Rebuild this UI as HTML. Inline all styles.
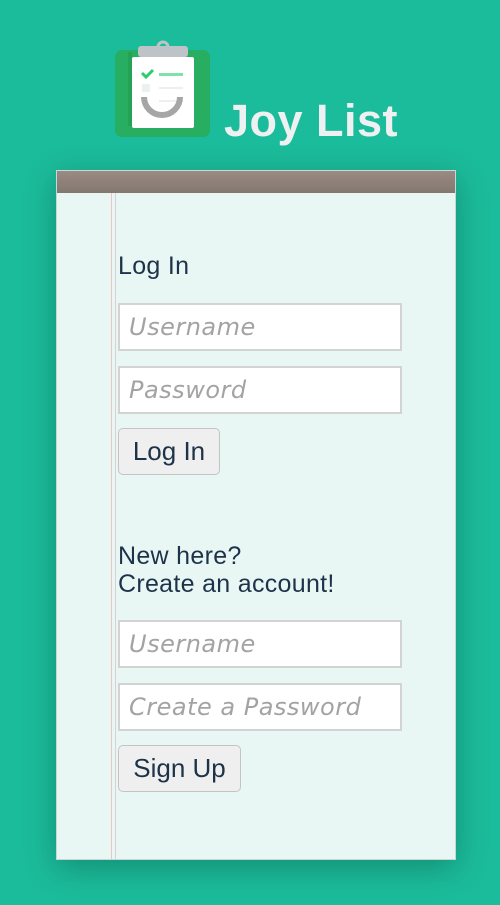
<!DOCTYPE html>
<html><head><style>
body{margin:0;width:500px;height:905px;background:#1bbc9b;font-family:"Liberation Sans",sans-serif;position:relative;overflow:hidden}
.card{position:absolute;left:56px;top:170px;width:400px;height:690px;background:#e8f7f4;box-shadow:0 8px 30px rgba(0,0,0,.25);border:1px solid #c9d8d4;box-sizing:border-box}
.bar{position:absolute;left:0;top:0;right:0;height:22px;background:linear-gradient(#9a8b83,#847770)}
.l1{position:absolute;top:22px;bottom:0;left:54px;width:1px;background:#e9c5c5}
.l2{position:absolute;top:22px;bottom:0;left:58px;width:1px;background:#e3cccc}
.t{position:absolute;left:118px;font-size:25px;color:#1e3349;line-height:28px;letter-spacing:0.3px}
.in{position:absolute;left:118px;width:284px;height:48px;background:#fff;border:2px solid #d3d3d3;box-sizing:border-box;font-family:"DejaVu Sans",sans-serif;font-style:italic;font-size:24px;letter-spacing:0.5px;color:#a3a3a3;padding-left:9px;line-height:44px;white-space:nowrap}
.btn{position:absolute;left:118px;height:47px;background:#efefef;border:1px solid #c4c4c4;border-radius:5px;box-sizing:border-box;font-size:26px;color:#1e3349;line-height:45px;text-align:center}
</style></head><body>
<svg style="position:absolute;left:112px;top:38px" width="104" height="104">
<rect x="3" y="12" width="95" height="87" rx="7" fill="#27ae60"/>
<rect x="20" y="19" width="62" height="71" rx="2" fill="#fff"/>
<rect x="16" y="14" width="4" height="74" fill="#24a256"/>
<rect x="26" y="8" width="50" height="11" rx="3" fill="#bdc3c7"/>
<circle cx="51" cy="9" r="5" fill="none" stroke="#bdc3c7" stroke-width="3"/>
<path d="M30 35l4 4 7-7" stroke="#2ecc71" stroke-width="3" fill="none"/>
<rect x="47" y="35" width="24" height="3" fill="#82e0aa"/>
<rect x="30" y="46" width="8" height="8" fill="#ecf0f1"/>
<rect x="47" y="49" width="24" height="2" fill="#ecf0f1"/>
<rect x="47" y="62" width="24" height="2" fill="#ecf0f1"/>
<path d="M32 59a18 18 0 0 0 36 0" stroke="#a6a6a6" stroke-width="6" fill="none"/>
</svg>
<div style="position:absolute;left:224px;top:95px;font-size:45px;font-weight:bold;color:#eef0f1;letter-spacing:0.5px">Joy List</div>
<div class="card"><div class="bar"></div><div class="l1"></div><div class="l2"></div></div>
<div class="t" style="top:252px">Log In</div>
<div class="in" style="top:303px">Username</div>
<div class="in" style="top:366px">Password</div>
<div class="btn" style="top:428px;width:102px">Log In</div>
<div class="t" style="top:542px">New here?<br>Create an account!</div>
<div class="in" style="top:620px">Username</div>
<div class="in" style="top:683px">Create a Password</div>
<div class="btn" style="top:745px;width:123px">Sign Up</div>
</body></html>
